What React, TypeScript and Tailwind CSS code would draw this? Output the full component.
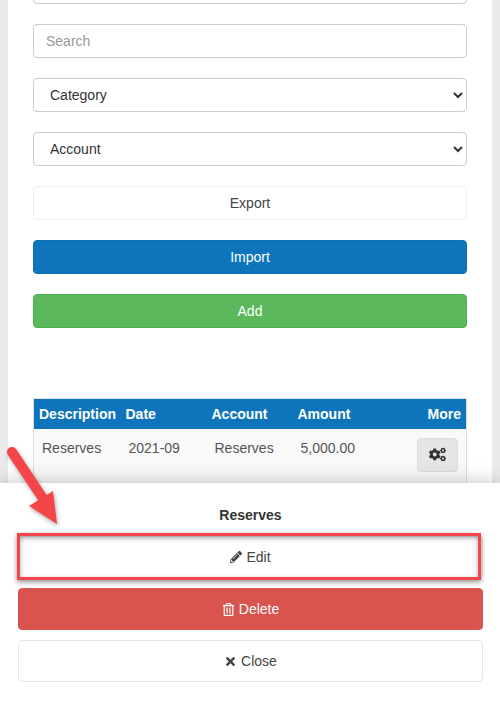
import { FaCogs, FaPencilAlt, FaRegTrashAlt, FaTimes } from 'react-icons/fa';

const field = 'h-[34px] w-full rounded-[4px] border border-[#ccc] bg-white px-3 text-sm text-[#333]';
const btn = 'flex w-full items-center justify-center gap-1 rounded-[4px] border text-sm';

export default function App() {
  return (
    <div className="relative h-[702px] w-[500px] overflow-hidden bg-[#eaeaea] font-['Liberation_Sans',Arial,sans-serif] text-sm text-[#333]">
      {/* Filters */}
      <div className="mx-2 -mt-[30px] h-[760px] bg-white px-[25px]">
        <div className="flex flex-col gap-5">
          <input className={field} />
          <input className={`${field} placeholder:text-[#999]`} placeholder="Search" />
          <select className={field} defaultValue="Category">
            <option>Category</option>
          </select>
          <select className={field} defaultValue="Account">
            <option>Account</option>
          </select>
          <button className={`${btn} h-[34px] border-[#eee] bg-white text-[#444]`}>Export</button>
          <button className={`${btn} h-[34px] border-[#0e6eb0] bg-[#0e75bc] text-white`}>Import</button>
          <button className={`${btn} h-[34px] border-[#4cae4c] bg-[#5cb85c] text-white`}>Add</button>
        </div>

        {/* Table */}
        <table className="mt-[70px] w-[434px] table-fixed border border-[#ddd]">
          <thead>
            <tr className="h-[30px] bg-[#0e75bc] font-bold text-white">
              <th className="w-[87px] pl-[5px] text-left">Description</th>
              <th className="w-[86px] pl-[5px] text-left">Date</th>
              <th className="w-[86px] pl-[5px] text-left">Account</th>
              <th className="w-[86px] pl-[5px] text-left">Amount</th>
              <th className="pr-[5px] text-right">More</th>
            </tr>
          </thead>
          <tbody>
            <tr className="h-[70px] bg-[#f9f9f9] align-top text-[#555]">
              <td className="py-[9px] pl-2">Reserves</td>
              <td className="py-[9px] pl-2">2021-09</td>
              <td className="py-[9px] pl-2">Reserves</td>
              <td className="py-[9px] pl-2">5,000.00</td>
              <td className="py-[9px] pr-2">
                <div className="ml-auto flex h-[34px] w-[41px] items-center justify-center rounded-[4px] border border-[#ddd] bg-[#e6e6e6]">
                  <FaCogs className="text-[17px] text-[#333]" />
                </div>
              </td>
            </tr>
          </tbody>
        </table>
      </div>

      {/* Action sheet */}
      <div className="absolute inset-x-0 bottom-0 h-[219px] bg-white pl-[18px] pr-[17px] pt-6 shadow-[0_0_18px_rgba(0,0,0,0.25)]">
        <div className="mb-[13px] text-center font-bold leading-4">Reserves</div>
        <div className="flex flex-col gap-[10px]">
          <button className={`${btn} h-[42px] border-[#e6e6e6] bg-white text-[#444]`}>
            <FaPencilAlt className="text-[12px]" />
            Edit
          </button>
          <button className={`${btn} h-[42px] border-[#d9534f] bg-[#d9534f] text-white`}>
            <FaRegTrashAlt className="text-[13px]" />
            Delete
          </button>
          <button className={`${btn} h-[42px] border-[#e6e6e6] bg-white text-[#444]`}>
            <FaTimes className="text-[13px]" />
            Close
          </button>
        </div>
      </div>

      {/* Annotation */}
      <div className="absolute left-[17px] top-[533px] h-[47px] w-[464px] border-[3px] border-[#f44649] shadow-[0_2px_5px_rgba(0,0,0,0.45),inset_0_2px_5px_rgba(0,0,0,0.35)]" />
      <svg className="absolute left-0 top-[440px]" width="70" height="92" viewBox="0 0 70 92" fill="none">
        <g style={{ filter: 'drop-shadow(1px 2px 2px rgba(0,0,0,0.35))' }}>
          <line x1="12" y1="12" x2="44" y2="60" stroke="#f44649" strokeWidth="10" strokeLinecap="round" />
          <polygon points="57,84 29,66 53,51" fill="#f44649" />
        </g>
      </svg>
    </div>
  );
}
